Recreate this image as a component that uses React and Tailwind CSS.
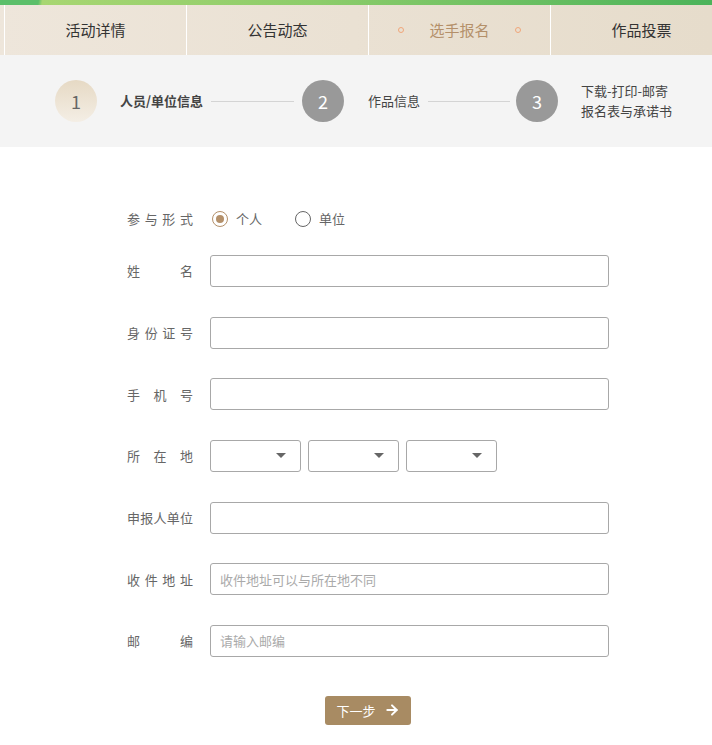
import { ArrowRight } from 'lucide-react';

const font = { fontFamily: '"Noto Sans CJK SC", "Noto Sans", sans-serif' };

const tabs = ['活动详情', '公告动态', '选手报名', '作品投票'];

function Tabs() {
  return (
    <div className="flex h-[50px] overflow-hidden bg-gradient-to-r from-[#eee6db] to-[#e6dccb] pl-1">
      {tabs.map((t, i) => (
        <div
          key={t}
          className={`flex w-[182px] shrink-0 items-center justify-center gap-[25px] border-l border-white text-[15px] ${
            i === 2 ? 'text-[#b4906a]' : 'text-[#333]'
          }`}
        >
          {i === 2 && <span className="size-[6px] rounded-full border border-[#f0a67a]" />}
          {t}
          {i === 2 && <span className="size-[6px] rounded-full border border-[#f0a67a]" />}
        </div>
      ))}
    </div>
  );
}

function Step({ n, active }) {
  return (
    <div
      className={`flex size-[42px] shrink-0 items-center justify-center rounded-full text-lg ${
        active ? 'bg-gradient-to-b from-[#e6d9c4] to-[#f4eee5] text-[#666]' : 'bg-[#999] text-white'
      }`}
    >
      {n}
    </div>
  );
}

function Steps() {
  return (
    <div className="flex h-[92px] items-center bg-[#f4f4f4] pl-[55px] text-[13px]">
      <Step n="1" active />
      <span className="ml-[23px] font-semibold text-[#444]">人员/单位信息</span>
      <span className="mx-2 h-px w-[83px] bg-[#d4d4d4]" />
      <Step n="2" />
      <span className="ml-[24px] text-[#444]">作品信息</span>
      <span className="ml-2 mr-[6px] h-px w-[82px] bg-[#d4d4d4]" />
      <Step n="3" />
      <span className="ml-[23px] leading-[20px] text-[#444]">
        下载-打印-邮寄
        <br />
        报名表与承诺书
      </span>
    </div>
  );
}

function Label({ children }) {
  return (
    <span className="w-[66px] shrink-0 text-[13px] text-[#666] [text-align-last:justify]">{children}</span>
  );
}

function Row({ label, children }) {
  return (
    <div className="flex h-[32px] items-center gap-[17px]">
      <Label>{label}</Label>
      {children}
    </div>
  );
}

function TextInput({ placeholder }) {
  return (
    <input
      placeholder={placeholder}
      className="h-[32px] w-[400px] rounded-[3px] border border-[#a8a8a8] px-[9px] text-[13px] text-[#333] outline-none placeholder:text-[#aaa]"
      style={font}
    />
  );
}

function Select() {
  return (
    <div className="flex h-[32px] w-[91px] items-center justify-end rounded-[3px] border border-[#a8a8a8] pr-[14px]">
      <span className="h-0 w-0 border-x-[5px] border-t-[5px] border-x-transparent border-t-[#666]" />
    </div>
  );
}

function Radio({ checked, label }) {
  return (
    <label className="flex items-center gap-[8px] text-[13px] text-[#666]">
      <span
        className={`flex size-[16px] items-center justify-center rounded-full border-[1.5px] ${
          checked ? 'border-[#b4906a]' : 'border-[#666]'
        }`}
      >
        {checked && <span className="size-[8px] rounded-full bg-[#b4906a]" />}
      </span>
      {label}
    </label>
  );
}

export default function App() {
  return (
    <div className="min-h-[745px] w-[712px] bg-white" style={font}>
      <div className="h-[5px] bg-[linear-gradient(100deg,#5cbf6a_0,#5cbf6a_38px,#a8d672_42px,#8ccc6a_45%,#4bb35a_100%)]" />
      <Tabs />
      <Steps />

      <div className="w-[482px] pl-[127px] pt-[56px] box-content">
        <div className="flex h-[32px] items-center gap-[19px]">
          <Label>参与形式</Label>
          <div className="flex items-center gap-[33px]">
            <Radio checked label="个人" />
            <Radio label="单位" />
          </div>
        </div>

        <div className="mt-[20px] flex flex-col gap-[29.67px]">
          <Row label="姓名">
            <TextInput />
          </Row>
          <Row label="身份证号">
            <TextInput />
          </Row>
          <Row label="手机号">
            <TextInput />
          </Row>
          <Row label="所在地">
            <div className="flex gap-[7px]">
              <Select />
              <Select />
              <Select />
            </div>
          </Row>
          <Row label="申报人单位">
            <TextInput />
          </Row>
          <Row label="收件地址">
            <TextInput placeholder="收件地址可以与所在地不同" />
          </Row>
          <Row label="邮编">
            <TextInput placeholder="请输入邮编" />
          </Row>
        </div>

        <div className="flex justify-center pt-[39px]">
          <button className="flex h-[29px] w-[86px] items-center justify-center gap-[8px] rounded-[3px] bg-[#a88b63] text-[13px] text-white">
            下一步
            <ArrowRight size={16} strokeWidth={3} />
          </button>
        </div>
      </div>
    </div>
  );
}
